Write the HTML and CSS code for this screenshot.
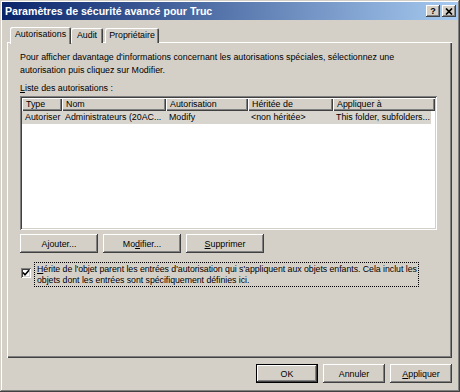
FILE: index.html
```html
<!DOCTYPE html>
<html lang="fr">
<head>
<meta charset="utf-8">
<title>Paramètres de sécurité avancé pour Truc</title>
<link rel="stylesheet" href="styles.css">
</head>
<body>
<div class="window">
  <div class="titlebar">
    <span class="title">Paramètres de sécurité avancé pour Truc</span>
    <div class="tbtns">
      <span class="tbtn help">?</span>
      <span class="tbtn close"><svg width="8" height="7" viewBox="0 0 8 7"><path d="M1 0.5 L7 6.5 M7 0.5 L1 6.5" stroke="#000" stroke-width="1.7" fill="none"/></svg></span>
    </div>
  </div>
  <div class="content">
    <div class="tabs">
      <div class="tab active t1">Autorisations</div>
      <div class="tab t2">Audit</div>
      <div class="tab t3">Propriétaire</div>
    </div>
    <div class="panel">
      <p class="intro">Pour afficher davantage d'informations concernant les autorisations spéciales, sélectionnez une<br>autorisation puis cliquez sur Modifier.</p>
      <div class="label"><u>L</u>iste des autorisations :</div>
      <div class="listbox">
        <div class="row header">
          <div class="cell c1">Type</div>
          <div class="cell c2">Nom</div>
          <div class="cell c3">Autorisation</div>
          <div class="cell c4">Héritée de</div>
          <div class="cell c5">Appliquer à</div>
        </div>
        <div class="row sel">
          <div class="cell c1">Autoriser</div>
          <div class="cell c2">Administrateurs (20AC...</div>
          <div class="cell c3">Modify</div>
          <div class="cell c4">&lt;non héritée&gt;</div>
          <div class="cell c5">This folder, subfolders...</div>
        </div>
      </div>
      <div class="btnrow">
        <span class="btn">A<u>j</u>outer...</span>
        <span class="btn">Mo<u>d</u>ifier...</span>
        <span class="btn"><u>S</u>upprimer</span>
      </div>
      <div class="inherit">
        <span class="checkbox"><svg width="8" height="8" viewBox="0 0 8 8"><path d="M1 3.5 L3 5.8 L7 1.2" stroke="#000" stroke-width="1.6" fill="none"/></svg></span>
        <div class="focus"><u>H</u>érite de l'objet parent les entrées d'autorisation qui s'appliquent aux objets enfants. Cela inclut les<br>objets dont les entrées sont spécifiquement définies ici.</div>
      </div>
    </div>
    <div class="footer">
      <span class="btn fbtn default">OK</span>
      <span class="btn fbtn">Annuler</span>
      <span class="btn fbtn"><u>A</u>ppliquer</span>
    </div>
  </div>
</div>
</body>
</html>
```
FILE: styles.css
```css
html, body {
  margin: 0;
  padding: 0;
}
body {
  width: 460px;
  height: 392px;
  background: #d4d0c8;
  font-family: "Liberation Sans", Arial, sans-serif;
  font-size: 8.85px;
  color: #000;
  overflow: hidden;
}
.window {
  width: 460px;
  height: 392px;
  box-sizing: border-box;
  padding: 2px;
  background: #d4d0c8;
  box-shadow: inset -1px -1px #404040, inset 1px 1px #d4d0c8, inset -2px -2px #808080, inset 2px 2px #ffffff;
  display: flex;
  flex-direction: column;
}
.titlebar {
  height: 18px;
  flex: none;
  background: linear-gradient(to right, #0a246a, #a6caf0);
  display: flex;
  align-items: center;
  justify-content: space-between;
  padding: 0 2px 0 3px;
}
.title {
  color: #fff;
  font-weight: bold;
  font-size: 10.6px;
}
.tbtns {
  display: flex;
  gap: 2px;
}
.tbtn {
  width: 14px;
  height: 12px;
  box-sizing: border-box;
  background: #d4d0c8;
  box-shadow: inset -1px -1px #404040, inset 1px 1px #ffffff, inset -2px -2px #808080;
  display: flex;
  align-items: center;
  justify-content: center;
  font-weight: bold;
  font-size: 9px;
  line-height: 1;
}
.content {
  flex: 1;
  display: flex;
  flex-direction: column;
  padding: 7px 6px 0 5px;
}
.tabs {
  display: flex;
  height: 15px;
  padding-left: 3px;
  position: relative;
  z-index: 1;
}
.tab {
  flex: none;
  box-sizing: border-box;
  height: 15px;
  margin-top: 1px;
  background: #d4d0c8;
  border-radius: 2px 2px 0 0;
  box-shadow: inset 1px 1px #ffffff, inset -1px 0 #404040, inset -2px 0 #808080;
  text-align: center;
  line-height: 14px;
}
.tab.active {
  height: 17px;
  margin-top: 0;
  line-height: 15px;
}
.t1 { width: 61px; }
.t2 { width: 32px; }
.t3 { width: 54px; margin-left: 2px; }
.panel {
  flex: none;
  height: 316px;
  box-sizing: border-box;
  background: #d4d0c8;
  box-shadow: inset 1px 1px #ffffff, inset -1px -1px #404040, inset -2px -2px #808080;
  padding: 9px 15px 0 13px;
  display: flex;
  flex-direction: column;
}
.intro {
  margin: 0 0 5px;
  line-height: 13px;
}
.label {
  line-height: 13px;
}
.listbox {
  margin-top: 1px;
  height: 134px;
  box-sizing: border-box;
  background: #fff;
  box-shadow: inset 1px 1px #808080, inset -1px -1px #ffffff, inset 2px 2px #404040, inset -2px -2px #d4d0c8;
  padding: 2px;
}
.row {
  display: flex;
  height: 13px;
}
.cell {
  flex: none;
  box-sizing: border-box;
  padding-left: 3px;
  line-height: 13px;
  white-space: nowrap;
  overflow: hidden;
}
.header .cell {
  background: #d4d0c8;
  box-shadow: inset 1px 1px #ffffff, inset -1px -1px #404040, inset -2px -2px #808080;
  line-height: 12px;
  padding-left: 4px;
}
.c1 { width: 40px; }
.c2 { width: 104px; }
.c3 { width: 82px; }
.c4 { width: 85px; }
.c5 { width: 102px; }
.sel {
  background: #d8d5cf;
  width: 409px;
}
.btnrow {
  margin-top: 4px;
  display: flex;
  gap: 5px;
}
.btn {
  flex: none;
  box-sizing: border-box;
  width: 78px;
  height: 19px;
  background: #d4d0c8;
  box-shadow: inset -1px -1px #404040, inset 1px 1px #ffffff, inset -2px -2px #808080;
  display: flex;
  align-items: center;
  justify-content: center;
}
.inherit {
  margin-top: 9px;
  display: flex;
  align-items: flex-start;
}
.checkbox {
  flex: none;
  width: 10px;
  height: 10px;
  margin: 6px 0 0 1px;
  box-sizing: border-box;
  background: #fff;
  box-shadow: inset 1px 1px #808080, inset -1px -1px #ffffff, inset 2px 2px #404040, inset -2px -2px #d4d0c8;
  display: flex;
  align-items: center;
  justify-content: center;
}
.focus {
  flex: none;
  margin-left: 3px;
  box-sizing: border-box;
  border: 1px dotted #000;
  padding: 1px 1px 0 2px;
  line-height: 11px;
  font-size: 8.75px;
  letter-spacing: -0.03px;
  white-space: nowrap;
}
.footer {
  margin-top: 6px;
  display: flex;
  justify-content: flex-end;
  gap: 5px;
}
.fbtn {
  width: 62px;
}
.default {
  box-shadow: inset 0 0 0 1px #000, inset -2px -2px #404040, inset 2px 2px #ffffff, inset -3px -3px #808080;
}
```
